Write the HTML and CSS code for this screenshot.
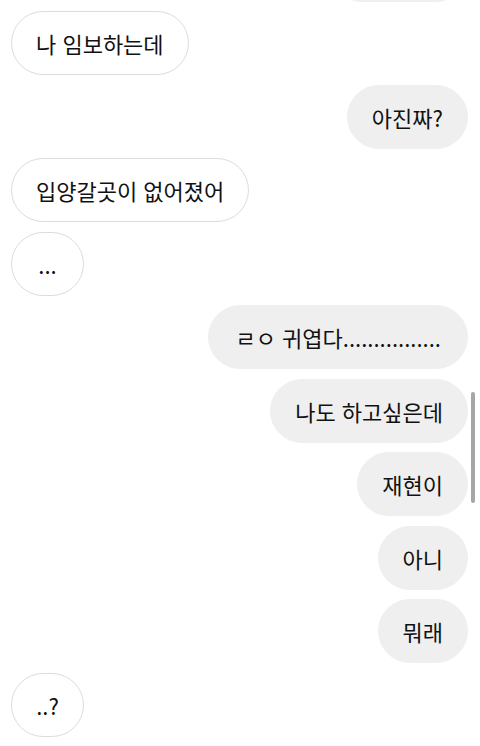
FILE: index.html
```html
<!DOCTYPE html>
<html lang="ko">
  <head>
    <meta charset="UTF-8" />
    <title>채팅</title>
    <link rel="stylesheet" href="styles.css">
  </head>
  <body>
    <div class="chat">
      <!-- 위로 잘린 말풍선 -->
      <div class="msg sent top-cut"></div>
      <div class="msg recv">나 임보하는데</div>
      <div class="msg sent">아진짜?</div>
      <div class="msg recv">입양갈곳이 없어졌어</div>
      <div class="msg recv short">...</div>
      <div class="msg sent wide">ㄹㅇ 귀엽다................</div>
      <div class="msg sent">나도 하고싶은데</div>
      <div class="msg sent">재현이</div>
      <div class="msg sent">아니</div>
      <div class="msg sent">뭐래</div>
      <div class="msg recv short">..?</div>
    </div>
    <div class="scrollbar"></div>
  </body>
</html>
```

FILE: styles.css
```css
body {
  margin: 0;
  background: #fff;
  font-family: "Noto Sans CJK KR", "Noto Sans", sans-serif;
  height: 746px;
  overflow: hidden;
  position: relative;
}

.chat {
  display: flex;
  flex-direction: column;
  gap: 9.5px;
  padding: 0 12px 0 11px;
  margin-top: -62.5px;
}

.msg {
  box-sizing: border-box;
  height: 64px;
  padding: 0 24px;
  line-height: 62px;
  font-size: 22px;
  color: #111;
  border-radius: 32px;
  white-space: nowrap;
}

.recv {
  align-self: flex-start;
  background: #fff;
  border: 1px solid #dcdcdc;
}

.sent {
  align-self: flex-end;
  background: #efefef;
  border: 1px solid #efefef;
}

.top-cut {
  width: 138px;
}

.wide {
  padding: 0 26px;
}

.short {
  min-width: 73px;
  text-align: center;
  padding: 0 12px;
}

.scrollbar {
  position: absolute;
  left: 471px;
  top: 392px;
  width: 4px;
  height: 111px;
  border-radius: 2px;
  background: #a6a6a6;
}
```
